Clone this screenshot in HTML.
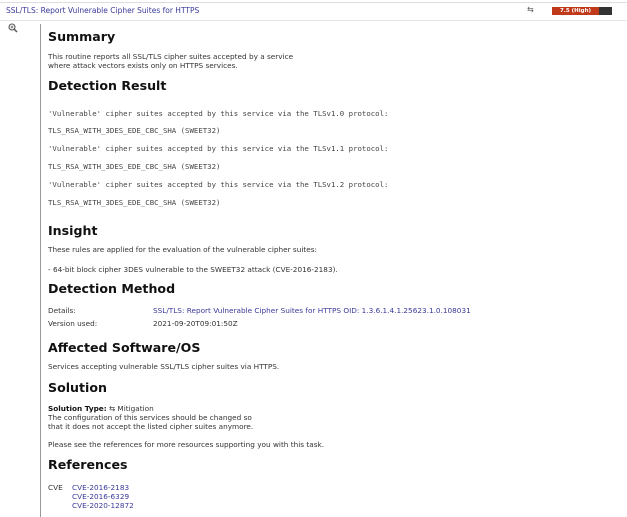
<!DOCTYPE html>
<html><head><meta charset="utf-8"><style>
body{margin:0;width:627px;height:517px;background:#fff;position:relative;overflow:hidden;font-family:"DejaVu Sans","Liberation Sans",sans-serif;color:#333}
.a{position:absolute;white-space:nowrap}
.t{font-size:7.3px;line-height:8px}
.m{font-family:"DejaVu Sans Mono","Liberation Mono",monospace;font-size:7.35px;line-height:8px;color:#444}
.h{font-size:12.6px;font-weight:bold;color:#111;line-height:14px}
.l{color:#3a3a9a}
</style></head><body>
<div class="a" style="left:0;top:2px;width:627px;height:1px;background:#ddd"></div>
<div class="a" style="left:0;top:20px;width:627px;height:1px;background:#e4e4e4"></div>
<div class="a t l" style="left:6px;top:7px;font-size:7.5px">SSL/TLS: Report Vulnerable Cipher Suites for HTTPS</div>
<div class="a t" style="left:527px;top:6px;font-size:8px;color:#555">⇆</div>
<div class="a" style="left:552px;top:7px;width:60px;height:8px;background:#333"></div>
<div class="a" style="left:552px;top:7px;width:47px;height:8px;background:#c0391b"></div>
<div class="a" style="left:552px;top:7px;width:47px;font-size:5.5px;line-height:8px;color:#fff;text-align:center;font-weight:bold">7.5 (High)</div>
<svg class="a" style="left:8px;top:23px" width="10" height="10" viewBox="0 0 10 10"><circle cx="4" cy="4" r="3" fill="none" stroke="#555" stroke-width="1.1"/><path d="M6 6L9 9" stroke="#555" stroke-width="1.5"/><path d="M2.5 4h3M4 2.5v3" stroke="#555" stroke-width=".8"/></svg>
<div class="a" style="left:40px;top:24px;width:1px;height:493px;background:#999"></div>

<div class="a h" style="left:48px;top:30px">Summary</div>
<div class="a t" style="left:48px;top:53px">This routine reports all SSL/TLS cipher suites accepted by a service</div>
<div class="a t" style="left:48px;top:62px">where attack vectors exists only on HTTPS services.</div>
<div class="a h" style="left:48px;top:79px">Detection Result</div>
<div class="a m" style="left:48px;top:110px">'Vulnerable' cipher suites accepted by this service via the TLSv1.0 protocol:</div>
<div class="a m" style="left:48px;top:127px">TLS_RSA_WITH_3DES_EDE_CBC_SHA (SWEET32)</div>
<div class="a m" style="left:48px;top:145px">'Vulnerable' cipher suites accepted by this service via the TLSv1.1 protocol:</div>
<div class="a m" style="left:48px;top:163px">TLS_RSA_WITH_3DES_EDE_CBC_SHA (SWEET32)</div>
<div class="a m" style="left:48px;top:181px">'Vulnerable' cipher suites accepted by this service via the TLSv1.2 protocol:</div>
<div class="a m" style="left:48px;top:199px">TLS_RSA_WITH_3DES_EDE_CBC_SHA (SWEET32)</div>
<div class="a h" style="left:48px;top:224px">Insight</div>
<div class="a t" style="left:48px;top:246px">These rules are applied for the evaluation of the vulnerable cipher suites:</div>
<div class="a t" style="left:48px;top:266px">- 64-bit block cipher 3DES vulnerable to the SWEET32 attack (CVE-2016-2183).</div>
<div class="a h" style="left:48px;top:282px">Detection Method</div>
<div class="a t" style="left:48px;top:307px">Details:</div>
<div class="a t l" style="left:153px;top:307px">SSL/TLS: Report Vulnerable Cipher Suites for HTTPS OID: 1.3.6.1.4.1.25623.1.0.108031</div>
<div class="a t" style="left:48px;top:320px">Version used:</div>
<div class="a t" style="left:153px;top:320px">2021-09-20T09:01:50Z</div>
<div class="a h" style="left:48px;top:341px">Affected Software/OS</div>
<div class="a t" style="left:48px;top:363px">Services accepting vulnerable SSL/TLS cipher suites via HTTPS.</div>
<div class="a h" style="left:48px;top:381px">Solution</div>
<div class="a t" style="left:48px;top:405px"><b style="color:#111">Solution Type:</b> ⇆ Mitigation</div>
<div class="a t" style="left:48px;top:414px">The configuration of this services should be changed so</div>
<div class="a t" style="left:48px;top:423px">that it does not accept the listed cipher suites anymore.</div>
<div class="a t" style="left:48px;top:441px">Please see the references for more resources supporting you with this task.</div>
<div class="a h" style="left:48px;top:458px">References</div>
<div class="a t" style="left:48px;top:484px">CVE</div>
<div class="a t l" style="left:72px;top:484px">CVE-2016-2183</div>
<div class="a t l" style="left:72px;top:493px">CVE-2016-6329</div>
<div class="a t l" style="left:72px;top:502px">CVE-2020-12872</div>
</body></html>
